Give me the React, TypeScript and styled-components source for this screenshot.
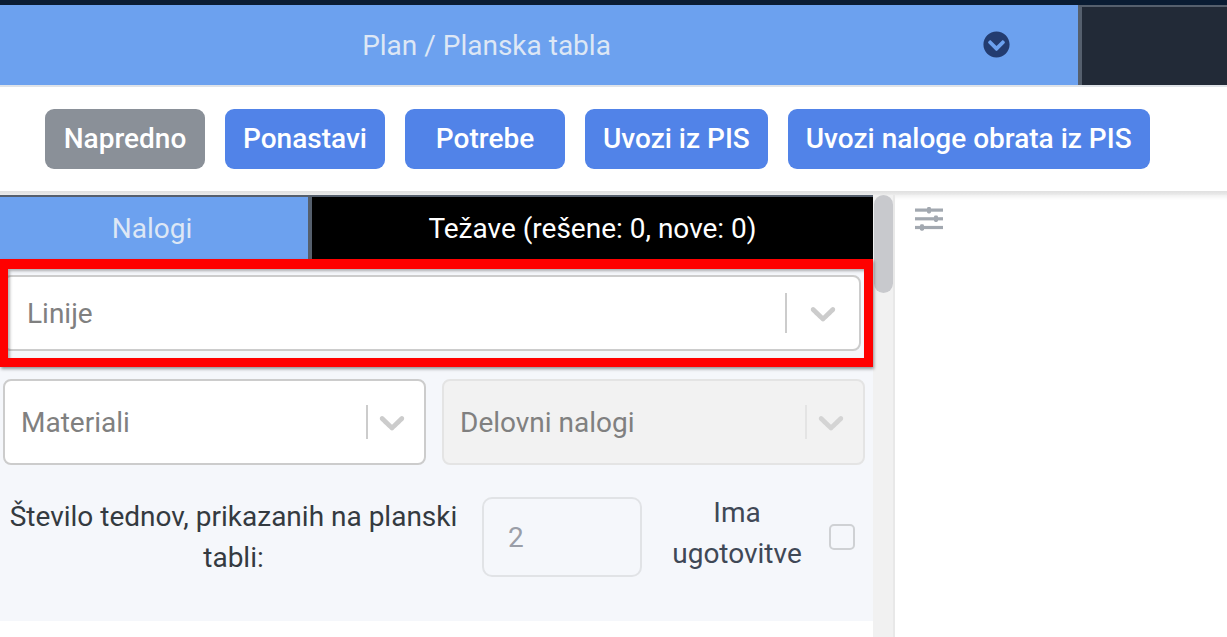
import React from 'react';
import styled, { createGlobalStyle } from 'styled-components';
import { FaChevronCircleDown } from 'react-icons/fa';

const GlobalStyle = createGlobalStyle`
  html, body {
    margin: 0;
    padding: 0;
    height: 100%;
    overflow: hidden;
    background: #fff;
    font-family: Roboto, "Liberation Sans", sans-serif;
  }
  * { box-sizing: border-box; }
`;

const Page = styled.div`
  width: 1227px;
  height: 637px;
  overflow: hidden;
  border-top: 5px solid #0a1c33;
  display: flex;
  flex-direction: column;
`;

const TopRow = styled.div`
  display: flex;
  height: 82px;
  border-bottom: 2px solid #dfe3e8;
  flex-shrink: 0;
`;

const TitleBar = styled.div`
  width: 1078px;
  background: #6ca1ef;
  display: flex;
  align-items: center;
`;

const Title = styled.div`
  width: 973px;
  text-align: center;
  color: #dde7f5;
  font-size: 28px;
  font-weight: 400;
`;

const TitleIcon = styled(FaChevronCircleDown)`
  color: #233c70;
  font-size: 27px;
  margin-left: 10px;
  margin-bottom: 1px;
`;

const DarkCorner = styled.div`
  flex: 1;
  background: #222a37;
  border-left: 4px solid #555f6d;
  border-top: 2px solid #555f6d;
`;

const Toolbar = styled.div`
  height: 104px;
  background: #fff;
  display: flex;
  align-items: center;
  gap: 20px;
  padding-left: 45px;
  flex-shrink: 0;
`;

const ToolButton = styled.button<{ $muted?: boolean; $width?: number }>`
  height: 60px;
  width: ${({ $width }) => ($width ? `${$width}px` : 'auto')};
  padding: 0 18px 2px;
  border: none;
  border-radius: 9px;
  background: ${({ $muted }) => ($muted ? '#8a9098' : '#5183e8')};
  color: #fff;
  font-family: inherit;
  font-size: 28px;
  font-weight: 500;
  white-space: nowrap;
`;

const Divider = styled.div`
  height: 4px;
  background: linear-gradient(#e0e0e0, #e6e6e6 60%, #ececec);
  flex-shrink: 0;
`;

const Body = styled.div`
  flex: 1;
  display: flex;
  min-height: 0;
`;

const LeftColumn = styled.div`
  width: 873px;
  display: flex;
  flex-direction: column;
`;

const Tabs = styled.div`
  height: 64px;
  display: flex;
  flex-shrink: 0;
  border-top: 2px solid #555f6d;
`;

const Tab = styled.div<{ $active?: boolean; $width?: number }>`
  width: ${({ $width }) => ($width ? `${$width}px` : 'auto')};
  flex: ${({ $width }) => ($width ? '0 0 auto' : '1')};
  background: ${({ $active }) => ($active ? '#6ca1ef' : '#000')};
  color: ${({ $active }) => ($active ? '#dde7f5' : '#fff')};
  display: flex;
  align-items: center;
  justify-content: center;
  padding: 1px ${({ $active }) => ($active ? '4px' : '0')} 0 0;
  font-size: 28px;
  font-weight: 400;
`;

const TabGap = styled.div`
  width: 4px;
  background: #555f6d;
`;

const Filters = styled.div`
  background: #f5f7fb;
  height: 362px;
  flex-shrink: 0;
  display: flex;
  flex-direction: column;
`;

const Highlight = styled.div`
  height: 108px;
  position: relative;
  border: solid #ff0000;
  border-width: 10px 9px 9px 8px;
  box-shadow: 1px 2px 3px rgba(0, 0, 0, 0.4);
  flex-shrink: 0;
`;

// the red frame cuts off the left end of the select it marks
const HighlightInner = styled.div`
  height: 100%;
  overflow: hidden;
  padding: 6px 3px 0 0;

  &::after {
    content: '';
    position: absolute;
    inset: 0;
    box-shadow: inset 2px 2px 3px rgba(0, 0, 0, 0.3);
    pointer-events: none;
  }
`;

const ClippedSelect = styled.div`
  display: flex;
  margin-left: -5px;
`;

const Select = styled.div<{ $disabled?: boolean; $height: number; $pad: number }>`
  height: ${({ $height }) => $height}px;
  flex: 1;
  display: flex;
  align-items: center;
  padding-left: ${({ $pad }) => $pad}px;
  border: 2px solid ${({ $disabled }) => ($disabled ? '#e4e4e4' : '#cccccc')};
  border-radius: 8px;
  background: ${({ $disabled }) => ($disabled ? '#f2f2f2' : '#fff')};
`;

const Placeholder = styled.span`
  flex: 1;
  color: #808080;
  font-size: 28px;
  padding-top: 1px;
`;

const SelectSep = styled.span<{ $disabled?: boolean; $height: number }>`
  width: 2px;
  height: ${({ $height }) => $height}px;
  background: ${({ $disabled }) => ($disabled ? '#e4e4e4' : '#cccccc')};
`;

const Chevron = styled.svg<{ $disabled?: boolean; $left: number; $right: number }>`
  width: 42px;
  height: 42px;
  margin: 0 ${({ $right }) => $right}px 0 ${({ $left }) => $left}px;
  fill: ${({ $disabled }) => ($disabled ? '#d4d4d4' : '#cccccc')};
`;

const SelectRow = styled.div`
  display: flex;
  gap: 16px;
  padding: 12px 8px 0 3px;
`;

const OptionsRow = styled.div`
  display: flex;
  align-items: center;
  padding: 27px 0 0 0;
`;

const WeeksLabel = styled.div`
  width: 467px;
  text-align: center;
  color: #343a40;
  font-size: 28px;
  line-height: 41px;
  margin-right: 15px;
`;

const WeeksInput = styled.div`
  width: 160px;
  height: 80px;
  border: 2px solid #e1e3e6;
  border-radius: 10px;
  color: #9a9ea8;
  font-size: 28px;
  display: flex;
  align-items: center;
  padding-left: 24px;
`;

const FindingsLabel = styled.div`
  width: 150px;
  margin: 0 0 8px 20px;
  text-align: center;
  color: #3f4856;
  font-size: 28px;
  line-height: 41px;
`;

const Checkbox = styled.div`
  width: 26px;
  height: 26px;
  margin-left: 17px;
  border: 2px solid #cfd1d4;
  border-radius: 5px;
`;

const ScrollTrack = styled.div`
  width: 20px;
  background: #f1f1f1;
  flex-shrink: 0;
`;

const ScrollThumb = styled.div`
  width: 19px;
  height: 98px;
  margin-left: 1px;
  border-radius: 10px;
  background: #c8c9cd;
`;

const RightColumn = styled.div`
  flex: 1;
  border-left: 2px solid #e8e8e8;
  padding: 11px 0 0 19px;
  box-shadow: inset 0 5px 4px -3px rgba(0, 0, 0, 0.07);
`;

const SliderIcon = styled.svg`
  display: block;
  width: 30px;
  height: 26px;
  fill: #a2a8b0;
`;

const chevronPath =
  'M4.516 7.548c0.436-0.446 1.043-0.481 1.576 0l3.908 3.747 3.908-3.747c0.533-0.481 1.141-0.446 1.574 0 0.436 0.445 0.408 1.197 0 1.615-0.406 0.418-4.695 4.502-4.695 4.502-0.217 0.223-0.502 0.335-0.787 0.335s-0.57-0.112-0.789-0.335c0 0-4.287-4.084-4.695-4.502s-0.436-1.17 0-1.615z';

type DropdownProps = {
  label: string;
  height: number;
  pad: number;
  sepHeight: number;
  chevronLeft: number;
  chevronRight: number;
  disabled?: boolean;
};

const Dropdown: React.FC<DropdownProps> = ({
  label,
  height,
  pad,
  sepHeight,
  chevronLeft,
  chevronRight,
  disabled,
}) => (
  <Select $height={height} $pad={pad} $disabled={disabled}>
    <Placeholder>{label}</Placeholder>
    <SelectSep $disabled={disabled} $height={sepHeight} />
    <Chevron viewBox="0 0 20 20" $disabled={disabled} $left={chevronLeft} $right={chevronRight}>
      <path d={chevronPath} />
    </Chevron>
  </Select>
);

const App: React.FC = () => (
  <>
    <GlobalStyle />
    <Page>
      <TopRow>
        <TitleBar>
          <Title>Plan / Planska tabla</Title>
          <TitleIcon />
        </TitleBar>
        <DarkCorner />
      </TopRow>
      <Toolbar>
        <ToolButton $muted $width={160}>Napredno</ToolButton>
        <ToolButton $width={160}>Ponastavi</ToolButton>
        <ToolButton $width={160}>Potrebe</ToolButton>
        <ToolButton>Uvozi iz PIS</ToolButton>
        <ToolButton>Uvozi naloge obrata iz PIS</ToolButton>
      </Toolbar>
      <Divider />
      <Body>
        <LeftColumn>
          <Tabs>
            <Tab $active $width={308}>Nalogi</Tab>
            <TabGap />
            <Tab>Težave (rešene: 0, nove: 0)</Tab>
          </Tabs>
          <Filters>
            <Highlight>
              <HighlightInner>
                <ClippedSelect>
                  <Dropdown label="Linije" height={76} pad={22} sepHeight={40} chevronLeft={15} chevronRight={15} />
                </ClippedSelect>
              </HighlightInner>
            </Highlight>
            <SelectRow>
              <Dropdown label="Materiali" height={86} pad={16} sepHeight={34} chevronLeft={3} chevronRight={11} />
              <Dropdown label="Delovni nalogi" height={86} pad={16} sepHeight={34} chevronLeft={3} chevronRight={11} disabled />
            </SelectRow>
            <OptionsRow>
              <WeeksLabel>Število tednov, prikazanih na planski tabli:</WeeksLabel>
              <WeeksInput>2</WeeksInput>
              <FindingsLabel>Ima ugotovitve</FindingsLabel>
              <Checkbox />
            </OptionsRow>
          </Filters>
        </LeftColumn>
        <ScrollTrack>
          <ScrollThumb />
        </ScrollTrack>
        <RightColumn>
          <SliderIcon viewBox="0 0 30 26">
            <rect x="1" y="2.5" width="28" height="3.2" />
            <rect x="1" y="11.2" width="28" height="3.2" />
            <rect x="1" y="19.9" width="28" height="3.2" />
            <rect x="13" y="1" width="4" height="6.4" rx="1.4" />
            <rect x="20" y="9.6" width="4" height="6.4" rx="1.4" />
            <rect x="6" y="18.3" width="4" height="6.4" rx="1.4" />
          </SliderIcon>
        </RightColumn>
      </Body>
    </Page>
  </>
);

export default App;
